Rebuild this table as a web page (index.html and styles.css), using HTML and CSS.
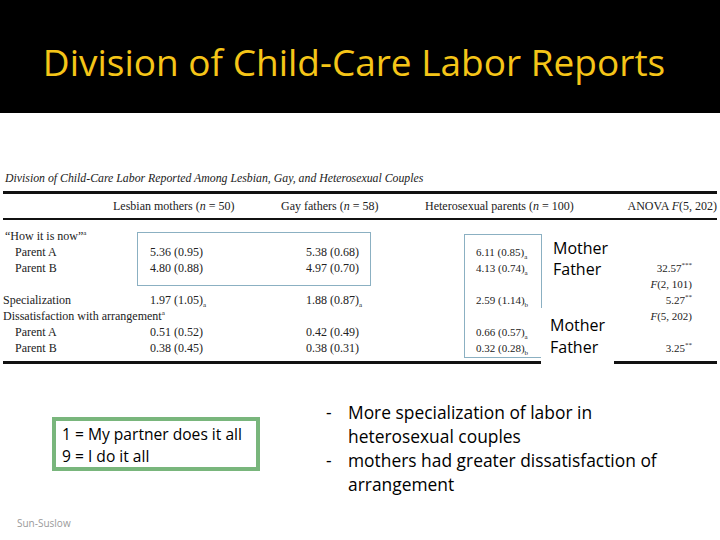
FILE: index.html
```html
<!DOCTYPE html>
<html lang="en">
<head>
<meta charset="utf-8">
<title>Division of Child-Care Labor Reports</title>
<link rel="stylesheet" href="styles.css">
</head>
<body>
<header class="titlebar"><h1>Division of Child-Care Labor Reports</h1></header>

<section class="tablewrap">
  <p class="caption">Division of Child-Care Labor Reported Among Lesbian, Gay, and Heterosexual Couples</p>
  <div class="thead">
    <span></span>
    <span>Lesbian mothers (<i>n</i> = 50)</span>
    <span>Gay fathers (<i>n</i> = 58)</span>
    <span>Heterosexual parents (<i>n</i> = 100)</span>
    <span class="anova-h">ANOVA <i>F</i>(5, 202)</span>
  </div>
  <div class="tbody">
    <span class="lbl span2">“How it is now”<sup>a</sup></span><span></span><span></span><span></span><span></span>

    <span class="lbl sub">Parent A</span><span>5.36 (0.95)</span><span>5.38 (0.68)</span><span class="het">6.11 (0.85)<sub>a</sub></span><span></span><span></span>

    <span class="lbl sub">Parent B</span><span>4.80 (0.88)</span><span>4.97 (0.70)</span><span class="het">4.13 (0.74)<sub>a</sub></span><span class="f">32.57<sup>***</sup></span><span></span>

    <span></span><span></span><span></span><span></span><span class="f"><i>F</i>(2, 101)</span><span></span>

    <span class="lbl">Specialization</span><span>1.97 (1.05)<sub>a</sub></span><span>1.88 (0.87)<sub>a</sub></span><span class="het">2.59 (1.14)<sub>b</sub></span><span class="f">5.27<sup>**</sup></span><span></span>

    <span class="lbl span3">Dissatisfaction with arrangement<sup>a</sup></span><span></span><span class="f"><i>F</i>(5, 202)</span><span></span>

    <span class="lbl sub">Parent A</span><span>0.51 (0.52)</span><span>0.42 (0.49)</span><span class="het">0.66 (0.57)<sub>a</sub></span><span></span><span></span>

    <span class="lbl sub">Parent B</span><span>0.38 (0.45)</span><span>0.38 (0.31)</span><span class="het">0.32 (0.28)<sub>b</sub></span><span class="f">3.25<sup>**</sup></span><span></span>
  </div>

  <div class="hl hl-a"></div>
  <div class="hl hl-b"></div>
  <div class="note note-a">Mother<br>Father</div>
  <div class="note note-b">Mother<br>Father</div>
</section>

<section class="lower">
  <div class="scale">
    <p>1 = My partner does it all</p>
    <p>9 = I do it all</p>
  </div>
  <ul class="points">
    <li>More specialization of labor in heterosexual couples</li>
    <li>mothers had greater dissatisfaction of arrangement</li>
  </ul>
</section>

<footer class="credit">Sun-Suslow</footer>
</body>
</html>
```

FILE: styles.css
```css
* { box-sizing: border-box; }

body {
  margin: 0;
  width: 720px;
  height: 540px;
  overflow: hidden;
  background: #ffffff;
  font-family: "Open Sans", "Liberation Sans", sans-serif;
  color: #000;
}

.titlebar {
  height: 113px;
  background: #000;
  display: flex;
  justify-content: center;
  padding: 40px 12px 0 0;
}

.titlebar h1 {
  margin: 0;
  font-size: 37px;
  line-height: 44px;
  font-weight: 400;
  color: #f5c518;
  white-space: nowrap;
}

/* ---------- table ---------- */
.tablewrap {
  position: relative;
  margin: 57px 3px 0 3px;
  font-family: "Liberation Serif", "Times New Roman", serif;
  font-size: 12px;
  color: #222;
}

.caption {
  margin: 0 0 5px 2px;
  font-style: italic;
  font-size: 11.8px;
  line-height: 16px;
  white-space: nowrap;
}

.thead {
  display: grid;
  grid-template-columns: 110px 168px 144px 1fr 1fr;
  align-items: center;
  height: 29px;
  border-top: 3px solid #111;
  border-bottom: 2px solid #111;
  white-space: nowrap;
}

.anova-h { justify-self: end; }

.tbody {
  display: grid;
  grid-template-columns: 147px 156px 170px 140px 76px 1fr;
  grid-auto-rows: 16px;
  line-height: 16px;
  padding: 8px 0 5px;
  border-bottom: 3px solid #111;
  white-space: nowrap;
}

.lbl.sub { padding-left: 12px; }
.span2 { grid-column: span 2; padding-left: 2px; }
.span3 { grid-column: span 3; }

.het { font-size: 11px; }
.f { text-align: right; font-size: 11px; }

sup, sub { font-size: 7px; line-height: 0; }

.hl {
  position: absolute;
  border: 1px solid #8bb0c2;
}
.hl-a { left: 134px; top: 62px; width: 234px; height: 54px; }
.hl-b { left: 461px; top: 64px; width: 78px; height: 124px; }

.note {
  position: absolute;
  font-family: "Open Sans", "Liberation Sans", sans-serif;
  font-size: 16px;
  line-height: 21px;
  color: #000;
}
.note-a { left: 550px; top: 68px; }
.note-b {
  left: 538px;
  top: 138px;
  width: 73px;
  height: 59px;
  padding: 6px 0 0 9px;
  line-height: 22px;
  background: #fff;
}

/* ---------- lower ---------- */
.lower {
  display: flex;
  align-items: flex-start;
  margin-top: 36px;
  padding-left: 52px;
}

.scale {
  margin-top: 17px;
  width: 208px;
  height: 54px;
  border: 4px solid #79b67c;
  padding: 2px 0 0 6px;
  font-size: 15.6px;
  line-height: 22px;
}
.scale p { margin: 0; white-space: nowrap; }

.points {
  list-style: none;
  margin: 0 0 0 66px;
  padding: 0;
  width: 352px;
  font-size: 17.4px;
  line-height: 24px;
}
.points li {
  position: relative;
  padding-left: 22px;
}
.points li::before {
  content: "-";
  position: absolute;
  left: 0;
  top: 0;
}

.credit {
  margin: 20px 0 0 17px;
  font-size: 10px;
  line-height: 14px;
  color: #9a9a9a;
}
```
